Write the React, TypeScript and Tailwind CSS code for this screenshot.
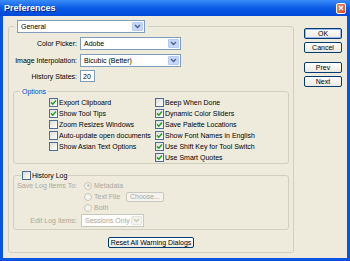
import React from "react";

const Chevron: React.FC<{ disabled?: boolean }> = ({ disabled }) => (
    <svg width="7" height="5" viewBox="0 0 7 5">
        <path d="M1 1 L3.5 3.5 L6 1" fill="none" stroke={disabled ? "#c9c7ba" : "#4d6185"} strokeWidth="1.4" />
    </svg>
);

const Select: React.FC<{ value: string; className: string; disabled?: boolean }> = ({ value, className, disabled }) => (
    <div
        className={`flex h-[13px] items-center border bg-white ${disabled ? "border-[#c9c7ba] text-[#aca899]" : "border-[#7f9db9] text-black"} ${className}`}
    >
        <span className="flex-1 overflow-hidden pl-[3px]">{value}</span>
        <span
            className={`m-[1px] flex h-[9px] w-[11px] items-center justify-center rounded-[1px] border ${disabled ? "border-[#e6e4d8] bg-[#f4f3ee]" : "border-[#b6cbf8] bg-[#c6d6fa]"}`}
        >
            <Chevron disabled={disabled} />
        </span>
    </div>
);

const Check: React.FC<{ on?: boolean }> = ({ on }) => (
    <span className="flex h-[9px] w-[9px] shrink-0 items-center justify-center border border-[#4a6e96] bg-gradient-to-br from-[#dcdcd7] to-white">
        {on && (
            <svg width="7" height="7" viewBox="0 0 7 7">
                <path d="M1 3.4 L2.8 5.2 L6 1.6" fill="none" stroke="#21a121" strokeWidth="1.5" />
            </svg>
        )}
    </span>
);

const Radio: React.FC<{ on?: boolean }> = ({ on }) => (
    <span className="flex h-[8px] w-[8px] shrink-0 items-center justify-center rounded-full border border-[#cac8bb] bg-[#f4f3ee]">
        {on && <span className="h-[3px] w-[3px] rounded-full bg-[#cac8bb]" />}
    </span>
);

const Btn: React.FC<{ label: string; def?: boolean; className?: string }> = ({ label, def, className }) => (
    <div
        className={`flex h-[11px] items-center justify-center rounded-[2px] border border-[#003c74] bg-gradient-to-b from-white to-[#ece9e0] ${def ? "shadow-[inset_0_0_0_1px_#9bb7ef]" : ""} ${className ?? ""}`}
    >
        {label}
    </div>
);

const Row: React.FC<{ on?: boolean; label: string }> = ({ on, label }) => (
    <div className="flex h-[11px] items-center gap-[1px]">
        <Check on={on} />
        <span>{label}</span>
    </div>
);

const App: React.FC = () => {
    const left = [
        { on: true, label: "Export Clipboard" },
        { on: true, label: "Show Tool Tips" },
        { on: false, label: "Zoom Resizes Windows" },
        { on: false, label: "Auto-update open documents" },
        { on: false, label: "Show Asian Text Options" },
    ];
    const right = [
        { on: false, label: "Beep When Done" },
        { on: true, label: "Dynamic Color Sliders" },
        { on: true, label: "Save Palette Locations" },
        { on: true, label: "Show Font Names in English" },
        { on: true, label: "Use Shift Key for Tool Switch" },
        { on: true, label: "Use Smart Quotes" },
    ];

    return (
        <div
            className="flex h-[261px] w-[350px] flex-col overflow-hidden whitespace-nowrap bg-[#0853e0] text-[7px] leading-[9px] text-black"
            style={{ fontFamily: '"Liberation Sans", Arial, sans-serif' }}
        >
            {/* title bar */}
            <div className="flex h-[16px] shrink-0 items-center bg-gradient-to-b from-[#3a8cf8] via-[#0a5ae6] to-[#0049d8] pl-[4px] pr-[4px]">
                <span className="flex-1 text-[9px] font-bold text-white [text-shadow:1px_1px_0_#0a1f80]">Preferences</span>
                <span className="flex h-[11px] w-[10px] items-center justify-center rounded-[2px] border border-white bg-gradient-to-br from-[#f08a6a] to-[#d9441c]">
                    <svg width="6" height="6" viewBox="0 0 6 6">
                        <path d="M1 1 L5 5 M5 1 L1 5" stroke="white" strokeWidth="1.4" />
                    </svg>
                </span>
            </div>

            {/* body */}
            <div className="mx-[3px] mb-[3px] flex flex-1 bg-[#eeebdd]">
                <fieldset className="ml-[5px] mt-[4px] mb-[5px] w-[286px] rounded-[3px] border border-[#d0d0bf]">
                    <legend className="ml-[5px] bg-[#eeebdd] px-[3px]">
                        <Select value="General" className="w-[128px]" />
                    </legend>

                    <div className="mt-[4px] flex flex-col gap-[4px]">
                        <div className="flex items-center gap-[3px]">
                            <span className="w-[68px] text-right">Color Picker:</span>
                            <Select value="Adobe" className="w-[101px]" />
                        </div>
                        <div className="flex items-center gap-[3px]">
                            <span className="w-[68px] text-right">Image Interpolation:</span>
                            <Select value="Bicubic (Better)" className="w-[101px]" />
                        </div>
                        <div className="-mt-[1px] flex items-center gap-[3px]">
                            <span className="w-[68px] text-right">History States:</span>
                            <div className="flex h-[12px] w-[15px] items-center border border-[#7f9db9] bg-white pl-[2px]">20</div>
                        </div>
                    </div>

                    <fieldset className="mx-[4px] mt-[5px] rounded-[3px] border border-[#d0d0bf] pt-[1px]">
                        <legend className="ml-[6px] px-[2px] text-[#0046d5]">Options</legend>
                        <div className="flex pl-[35px]">
                            <div className="w-[106px]">
                                {left.map((r) => (
                                    <Row key={r.label} on={r.on} label={r.label} />
                                ))}
                            </div>
                            <div>
                                {right.map((r) => (
                                    <Row key={r.label} on={r.on} label={r.label} />
                                ))}
                            </div>
                        </div>
                    </fieldset>

                    <fieldset className="mx-[4px] mt-[7px] rounded-[3px] border border-[#d0d0bf] pb-[2px] text-[#aca899]">
                        <legend className="ml-[7px] px-[1px]">
                            <span className="flex items-center gap-[1px] text-black">
                                <Check />
                                History Log
                            </span>
                        </legend>
                        <div className="flex h-[11px] items-center">
                            <span className="w-[63px] text-right">Save Log Items To:</span>
                            <span className="ml-[7px] flex items-center gap-[2px]">
                                <Radio on />
                                Metadata
                            </span>
                        </div>
                        <div className="flex h-[11px] items-center">
                            <span className="w-[63px]" />
                            <span className="ml-[7px] flex w-[42px] items-center gap-[2px]">
                                <Radio />
                                Text File
                            </span>
                            <span className="flex h-[10px] w-[38px] items-center justify-center rounded-[2px] border border-[#cac8bb] bg-[#f4f3ee]">
                                Choose...
                            </span>
                        </div>
                        <div className="flex h-[11px] items-center">
                            <span className="w-[63px]" />
                            <span className="ml-[7px] flex items-center gap-[2px]">
                                <Radio />
                                Both
                            </span>
                        </div>
                        <div className="mt-[1px] flex items-center gap-[4px]">
                            <span className="w-[63px] text-right">Edit Log Items:</span>
                            <Select value="Sessions Only" className="w-[63px]" disabled />
                        </div>
                    </fieldset>

                    <div className="mt-[7px] flex justify-center">
                        <Btn label="Reset All Warning Dialogs" className="w-[86px]" />
                    </div>
                </fieldset>

                <div className="ml-[10px] mt-[12px] flex w-[38px] flex-col">
                    <Btn label="OK" def />
                    <Btn label="Cancel" className="mt-[3px]" />
                    <Btn label="Prev" className="mt-[9px]" />
                    <Btn label="Next" className="mt-[3px]" />
                </div>
            </div>
        </div>
    );
};

export default App;
